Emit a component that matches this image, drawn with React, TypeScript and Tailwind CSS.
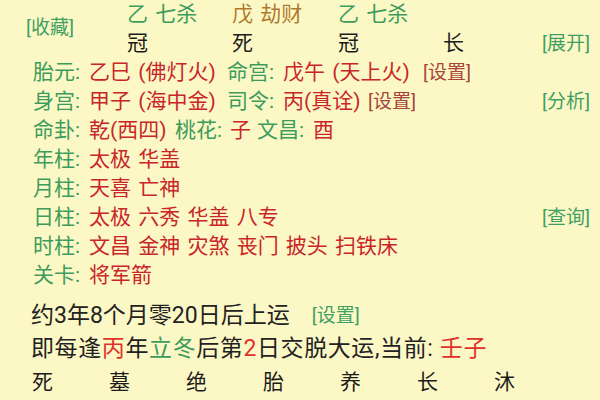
const GREEN = 'text-[#3c9c5c]';
const RED = 'text-[#c8262b]';

function Label({ children, w = 'w-[56px]' }: { children: string; w?: string }) {
  return <span className={`${w} shrink-0 ${GREEN}`}>{children}</span>;
}

function Val({ children, w }: { children: string; w?: string }) {
  return <span className={`${w ?? ''} shrink-0 ${RED}`}>{children}</span>;
}

function Btn({ children, red }: { children: string; red?: boolean }) {
  return (
    <span className={`text-[19px] ${red ? 'text-[#a8443a]' : 'text-[#3f9f63]'}`}>{children}</span>
  );
}

const stars: [string, string][] = [
  ['年柱:', '太极 华盖'],
  ['月柱:', '天喜 亡神'],
];

export default function App() {
  return (
    <div className="w-[600px] h-[400px] overflow-hidden bg-[#fcf8c6] font-['Roboto','Noto_Sans_CJK_SC',sans-serif] text-[21px] leading-[29px] [word-spacing:2px] text-[#1c1c1c]">
      {/* header: pillars */}
      <div className="flex">
        <div className="w-[127px] shrink-0 pl-[26px] flex items-center pb-[4px]">
          <Btn>[收藏]</Btn>
        </div>
        <div className="flex-1">
          <div className="flex h-[29px] items-center">
            <span className={`w-[105px] ${GREEN}`}>乙 七杀</span>
            <span className="w-[106px] text-[#b07a2e]">戊 劫财</span>
            <span className={`w-[105px] ${GREEN}`}>乙 七杀</span>
          </div>
          <div className="flex h-[29px] items-center pr-[10px]">
            <span className="w-[105px]">冠</span>
            <span className="w-[106px]">死</span>
            <span className="w-[105px]">冠</span>
            <span className="w-[60px]">长</span>
            <span className="ml-auto">
              <Btn>[展开]</Btn>
            </span>
          </div>
        </div>
      </div>

      {/* details */}
      <div className="pl-[33px] pr-[10px]">
        <div className="flex h-[29px] items-center">
          <Label>胎元:</Label>
          <Val w="w-[138px]">乙巳 (佛灯火)</Val>
          <Label>命宫:</Label>
          <Val w="w-[140px]">戊午 (天上火)</Val>
          <Btn red>[设置]</Btn>
        </div>
        <div className="flex h-[29px] items-center">
          <Label>身宫:</Label>
          <Val w="w-[138px]">甲子 (海中金)</Val>
          <Label>司令:</Label>
          <Val w="w-[85px]">丙(真诠)</Val>
          <Btn red>[设置]</Btn>
          <span className="ml-auto">
            <Btn>[分析]</Btn>
          </span>
        </div>
        <div className="flex h-[29px] items-center">
          <Label>命卦:</Label>
          <Val w="w-[86px]">乾(西四)</Val>
          <Label w="w-[55px]">桃花:</Label>
          <Val w="w-[27px]">子</Val>
          <Label>文昌:</Label>
          <Val>酉</Val>
        </div>
        {stars.map(([k, v]) => (
          <div key={k} className="flex h-[29px] items-center">
            <Label>{k}</Label>
            <Val>{v}</Val>
          </div>
        ))}
        <div className="flex h-[29px] items-center">
          <Label>日柱:</Label>
          <Val>太极 六秀 华盖 八专</Val>
          <span className="ml-auto">
            <Btn>[查询]</Btn>
          </span>
        </div>
        <div className="flex h-[29px] items-center">
          <Label>时柱:</Label>
          <Val>文昌 金神 灾煞 丧门 披头 扫铁床</Val>
        </div>
        <div className="flex h-[29px] items-center">
          <Label>关卡:</Label>
          <Val>将军箭</Val>
        </div>
      </div>

      {/* luck start */}
      <div className="pl-[31px] mt-[8px] text-[23px] leading-[33px] text-[#222] [word-spacing:0px]">
        <div className="flex items-center">
          <span>约3年8个月零20日后上运</span>
          <span className="ml-[22px]">
            <Btn>[设置]</Btn>
          </span>
        </div>
        <div className="tracking-[0.6px]">
          即每逢<span className="text-[#e0322a]">丙</span>年<span className={GREEN}>立冬</span>后第
          <span className="text-[#e0322a]">2</span>日交脱大运,当前: <span className="text-[#e0322a]">壬子</span>
        </div>
      </div>

      <div className="flex pl-[32px] mt-[3px] h-[29px] items-center">
        {['死', '墓', '绝', '胎', '养', '长', '沐'].map((s) => (
          <span key={s} className="w-[77px] shrink-0">
            {s}
          </span>
        ))}
      </div>
    </div>
  );
}
